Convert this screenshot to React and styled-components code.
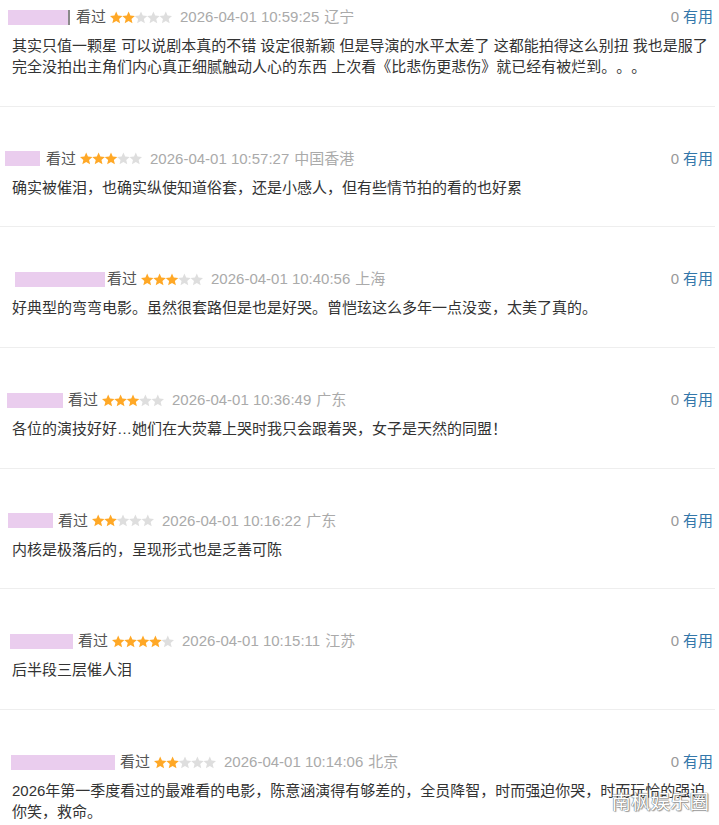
import React from 'react'
import styled, { createGlobalStyle } from 'styled-components'

const GlobalStyle = createGlobalStyle`
    html, body {
        margin: 0;
        padding: 0;
        background: #fff;
        overflow: hidden;
    }
    body {
        font-family: "Liberation Sans", "Noto Sans CJK SC", sans-serif;
        text-spacing-trim: space-all;
    }
`

const comments = [
    { mask: [8, 60, 6], trace: true, stars: 2, time: '2026-04-01 10:59:25', place: '辽宁',
      text: '其实只值一颗星 可以说剧本真的不错 设定很新颖 但是导演的水平太差了 这都能拍得这么别扭 我也是服了完全没拍出主角们内心真正细腻触动人心的东西 上次看《比悲伤更悲伤》就已经有被烂到。。。' },
    { mask: [5, 35, 6], stars: 3, time: '2026-04-01 10:57:27', place: '中国香港',
      text: '确实被催泪，也确实纵使知道俗套，还是小感人，但有些情节拍的看的也好累' },
    { mask: [15, 90, 2], stars: 3, time: '2026-04-01 10:40:56', place: '上海',
      text: '好典型的弯弯电影。虽然很套路但是也是好哭。曾恺玹这么多年一点没变，太美了真的。' },
    { mask: [7, 56, 5], stars: 3, time: '2026-04-01 10:36:49', place: '广东',
      text: '各位的演技好好…她们在大荧幕上哭时我只会跟着哭，女子是天然的同盟！' },
    { mask: [8, 45, 5], stars: 2, time: '2026-04-01 10:16:22', place: '广东',
      text: '内核是极落后的，呈现形式也是乏善可陈' },
    { mask: [10, 63, 5], stars: 4, time: '2026-04-01 10:15:11', place: '江苏',
      text: '后半段三层催人泪' },
    { mask: [11, 104, 5], stars: 2, time: '2026-04-01 10:14:06', place: '北京',
      text: '2026年第一季度看过的最难看的电影，陈意涵演得有够差的，全员降智，时而强迫你哭，时而玩恰的强迫你笑，救命。' },
]

const Page = styled.div`
    position: relative;
    width: 719px;
    height: 825px;
    overflow: hidden;
    background: #fff;
`

const List = styled.div`
    display: flex;
    flex-direction: column;
    padding-right: 4px;
`

const Item = styled.div`
    padding: 42px 0 28.7px;
    border-bottom: 1px solid #eeeeee;
    &:first-child {
        padding-top: 7px;
    }
`

const Header = styled.div`
    display: flex;
    align-items: center;
    justify-content: space-between;
    height: 20px;
    padding-right: 2px;
    font-size: 15px;
    line-height: 20px;
`

const Meta = styled.div`
    display: flex;
    align-items: center;
`

const NameMask = styled.span`
    display: block;
    width: ${p => p.$width}px;
    height: 15px;
    margin-left: ${p => p.$left}px;
    margin-right: ${p => p.$right}px;
    background: #eacdee;
    border-right: ${p => (p.$trace ? '2px solid #8a8a8a' : 'none')};
`

const Status = styled.span`
    color: #555;
    margin-right: 4px;
`

const StarsBox = styled.svg`
    display: block;
    margin-right: 8px;
`

const Time = styled.span`
    color: #aaa;
    margin-right: 5px;
`

const Place = styled.span`
    color: #aaa;
`

const Votes = styled.div`
    display: flex;
    align-items: center;
    gap: 4px;
`

const Count = styled.span`
    color: #999;
`

const Useful = styled.span`
    color: #3377aa;
`

const Content = styled.p`
    margin: 8px 0 0;
    padding: 0 1px 0 12px;
    font-size: 15px;
    line-height: 21px;
    color: #333;
`

const Watermark = styled.div`
    position: absolute;
    right: 10px;
    bottom: 13px;
    font-family: "Noto Sans CJK SC", sans-serif;
    font-size: 19.5px;
    line-height: 22px;
    color: #fff;
    text-shadow: 0 0 1px #666, 0 0 1px #666, 1px 1px 1px rgba(0, 0, 0, 0.35);
`

const starPoints = (cx, cy, outer, inner) => {
    const pts = []
    for (let i = 0; i < 10; i++) {
        const r = i % 2 ? inner : outer
        const a = (-90 + 36 * i) * Math.PI / 180
        pts.push(`${(cx + r * Math.cos(a)).toFixed(2)},${(cy + r * Math.sin(a)).toFixed(2)}`)
    }
    return pts.join(' ')
}

function Stars({ value }) {
    const step = 12.4
    return (
        <StarsBox width={62} height={13} viewBox="0 0 62 13">
            {[0, 1, 2, 3, 4].map(i => (
                <polygon
                    key={i}
                    points={starPoints(i * step + step / 2, 7, 6.6, 3)}
                    fill={i < value ? '#ffa826' : '#dedede'}
                />
            ))}
        </StarsBox>
    )
}

function Comment({ item }) {
    const [left, width, right] = item.mask
    return (
        <Item>
            <Header>
                <Meta>
                    <NameMask $left={left} $width={width} $right={right} $trace={item.trace} />
                    <Status>看过</Status>
                    <Stars value={item.stars} />
                    <Time>{item.time}</Time>
                    <Place>{item.place}</Place>
                </Meta>
                <Votes>
                    <Count>0</Count>
                    <Useful>有用</Useful>
                </Votes>
            </Header>
            <Content>{item.text}</Content>
        </Item>
    )
}

export default function App() {
    return (
        <Page>
            <GlobalStyle />
            <List>
                {comments.map((c, i) => <Comment key={i} item={c} />)}
            </List>
            <Watermark>南枫娱乐圈</Watermark>
        </Page>
    )
}
